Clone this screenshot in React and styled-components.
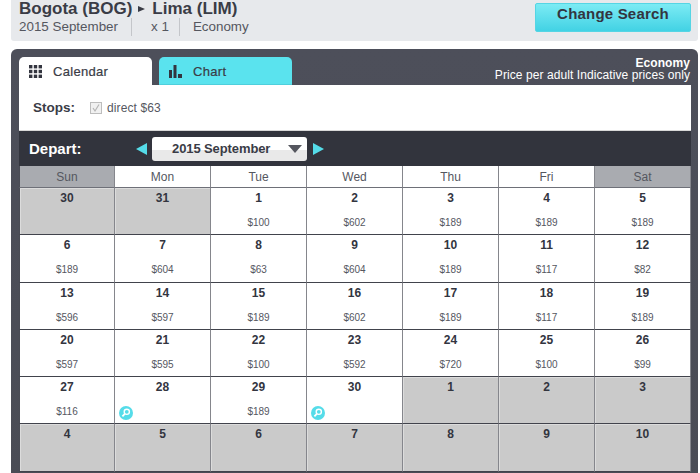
import React from 'react';
import styled, { createGlobalStyle } from 'styled-components';

const GlobalStyle = createGlobalStyle`
    html, body {
        margin: 0;
        padding: 0;
        background: #fff;
        height: 473px;
        overflow: hidden;
    }
    * { box-sizing: border-box; }
`;

const Page = styled.div`
    width: 700px;
    height: 473px;
    overflow: hidden;
    padding: 0 2px 0 11px;
    font-family: "Liberation Sans", Arial, sans-serif;
    color: #3a3c46;
`;

const SearchBar = styled.div`
    height: 41px;
    background: #e7e9ec;
    border-radius: 0 0 3px 3px;
    display: flex;
    justify-content: space-between;
    padding: 0 7px 0 8px;
    margin-bottom: 8px;
`;

const Route = styled.div`
    font-size: 17px;
    font-weight: bold;
    line-height: 17px;
    color: #3a3c46;
    display: flex;
    align-items: center;
`;

const RouteArrow = styled.span`
    width: 0;
    height: 0;
    margin: 1px 7px 0 6px;
    border-left: 7px solid #3a3c46;
    border-top: 3.5px solid transparent;
    border-bottom: 3.5px solid transparent;
`;

const Summary = styled.div`
    display: flex;
    margin-top: 1px;
    font-size: 13.4px;
    line-height: 18px;
    color: #55575f;
`;

const SummaryItem = styled.span`
    padding: 0 ${p => p.$right}px 0 ${p => p.$left}px;
    border-right: ${p => (p.$last ? 'none' : '1px solid #c4c6ca')};
`;

const ChangeButton = styled.button`
    width: 156px;
    height: 29px;
    margin-top: 3px;
    padding: 0 0 9px;
    border: 1px solid #55d5e4;
    border-radius: 2px;
    background: linear-gradient(#7cebf4, #42d2e4);
    color: #33353f;
    font-family: inherit;
    font-size: 15px;
    font-weight: bold;
    letter-spacing: 0.2px;
`;

const Panel = styled.div`
    height: 440px;
    background: linear-gradient(#4d4f5a, #4a4c55);
    border-radius: 6px 6px 0 0;
    padding: 8px 7px 0 8px;
`;

const PanelTop = styled.div`
    height: 28px;
    display: flex;
    justify-content: space-between;
`;

const Tabs = styled.div`
    display: flex;
    gap: 7px;
`;

const Tab = styled.div`
    width: 133px;
    height: 28px;
    border-radius: 5px 5px 0 0;
    background: ${p => (p.$active ? '#fff' : '#5ae3ee')};
    box-shadow: ${p => (p.$active ? 'none' : 'inset 0 -1px 0 #4fcfdc')};
    display: flex;
    align-items: center;
    padding-left: 10px;
    gap: 11px;
    font-size: 13px;
    letter-spacing: 0.3px;
    color: #3a3c46;
    -webkit-text-stroke: 0.2px #3a3c46;
`;

const Notes = styled.div`
    text-align: right;
    color: #fff;
    font-size: 12px;
    line-height: 13px;
    letter-spacing: 0.08px;
    padding-right: 1px;
`;

const NoteTitle = styled.div`
    font-weight: bold;
    line-height: 12px;
`;

const StopsRow = styled.div`
    height: 46px;
    background: #fff;
    display: flex;
    align-items: center;
    padding-left: 14px;
    border-bottom: 1px solid #d8d8d8;
    font-size: 12px;
    letter-spacing: 0.12px;
    color: #55575f;
`;

const StopsLabel = styled.span`
    font-size: 13.5px;
    font-weight: bold;
    letter-spacing: 0;
    color: #3a3c46;
    margin-right: 15px;
`;

const CheckBox = styled.span`
    width: 12px;
    height: 12px;
    border: 1px solid #bdbdbd;
    background: #f1f1f1;
    margin-right: 5px;
    display: flex;
    align-items: center;
    justify-content: center;
`;

const DepartBar = styled.div`
    height: 35px;
    background: #32343d;
    display: flex;
    align-items: center;
    padding-left: 10px;
`;

const DepartLabel = styled.span`
    width: 107px;
    color: #fff;
    font-size: 15px;
    font-weight: bold;
`;

const Arrow = styled.span`
    width: 0;
    height: 0;
    border-top: 6.5px solid transparent;
    border-bottom: 6.5px solid transparent;
    border-${p => (p.$left ? 'right' : 'left')}: 11px solid #55dce9;
    margin: 0 ${p => (p.$left ? 5 : 0)}px 0 ${p => (p.$left ? 0 : 6)}px;
`;

const MonthSelect = styled.div`
    width: 155px;
    height: 24px;
    border-radius: 3px;
    background: linear-gradient(#fff 0, #fff 55%, #e9e9e9 55%, #e9e9e9 100%);
    display: flex;
    align-items: center;
    justify-content: space-between;
    padding: 0 5px 0 20px;
    font-size: 13px;
    font-weight: bold;
    letter-spacing: -0.1px;
    color: #3a3c46;
`;

const Caret = styled.span`
    width: 0;
    height: 0;
    border-left: 7.5px solid transparent;
    border-right: 7.5px solid transparent;
    border-top: 8px solid #55575f;
`;

const Grid = styled.div`
    display: grid;
    grid-template-columns: repeat(7, 96px);
    background: #fff;
`;

const Head = styled.div`
    height: 22px;
    text-align: center;
    font-size: 12px;
    line-height: 23px;
    color: #55575f;
    background: ${p => (p.$weekend ? '#a9abb0' : '#fff')};
    border-right: 1px solid #85868c;
    border-bottom: 1px solid #6e7078;
    border-left: ${p => (p.$first ? '1px solid #4a4c55' : 'none')};
`;

const Day = styled.div`
    position: relative;
    height: ${p => (p.$tall ? 48 : 47)}px;
    text-align: center;
    background: ${p => (p.$muted ? '#cacaca' : '#fff')};
    border-right: 1px solid #85868c;
    border-bottom: 1px solid #41434c;
    border-left: ${p => (p.$first ? '1px solid #4a4c55' : 'none')};
    box-shadow: ${p => (p.$muted ? 'inset 1px 1px 0 #dcdcdc' : 'none')};
    padding-top: 3px;
`;

const DayNumber = styled.div`
    font-size: 12px;
    font-weight: bold;
    line-height: 14px;
    color: #33353f;
`;

const Price = styled.div`
    margin-top: 12px;
    font-size: 10px;
    line-height: 12px;
    color: #55575f;
`;

const SearchIcon = styled.svg`
    position: absolute;
    left: 4px;
    bottom: 3px;
`;

const weekdays = ['Sun', 'Mon', 'Tue', 'Wed', 'Thu', 'Fri', 'Sat'];

const days = [
    [30, null, 1], [31, null, 1], [1, '$100'], [2, '$602'], [3, '$189'], [4, '$189'], [5, '$189'],
    [6, '$189'], [7, '$604'], [8, '$63'], [9, '$604'], [10, '$189'], [11, '$117'], [12, '$82'],
    [13, '$596'], [14, '$597'], [15, '$189'], [16, '$602'], [17, '$189'], [18, '$117'], [19, '$189'],
    [20, '$597'], [21, '$595'], [22, '$100'], [23, '$592'], [24, '$720'], [25, '$100'], [26, '$99'],
    [27, '$116'], [28, 'search'], [29, '$189'], [30, 'search'], [1, null, 1], [2, null, 1], [3, null, 1],
    [4, null, 1], [5, null, 1], [6, null, 1], [7, null, 1], [8, null, 1], [9, null, 1], [10, null, 1],
];

const Magnifier = () => (
    <SearchIcon width="14" height="14" viewBox="0 0 14 14">
        <circle cx="7" cy="7" r="7" fill="#55dce9" />
        <circle cx="7.8" cy="5.8" r="2.6" fill="none" stroke="#fff" strokeWidth="1.4" />
        <path d="M5.8 7.9 L3.4 10.4" stroke="#fff" strokeWidth="1.8" />
    </SearchIcon>
);

const App = () => (
    <Page>
        <GlobalStyle />
        <SearchBar>
            <div>
                <Route>Bogota (BOG)<RouteArrow />Lima (LIM)</Route>
                <Summary>
                    <SummaryItem $left={0} $right={13}>2015 September</SummaryItem>
                    <SummaryItem $left={19} $right={10}>x 1</SummaryItem>
                    <SummaryItem $left={13} $right={0} $last>Economy</SummaryItem>
                </Summary>
            </div>
            <ChangeButton>Change Search</ChangeButton>
        </SearchBar>
        <Panel>
            <PanelTop>
                <Tabs>
                    <Tab $active>
                        <svg width="13" height="13" viewBox="0 0 13 13" fill="#33353f">
                            <rect x="0" y="0" width="3.4" height="3.4" />
                            <rect x="4.8" y="0" width="3.4" height="3.4" />
                            <rect x="9.6" y="0" width="3.4" height="3.4" />
                            <rect x="0" y="4.8" width="3.4" height="3.4" />
                            <rect x="4.8" y="4.8" width="3.4" height="3.4" />
                            <rect x="9.6" y="4.8" width="3.4" height="3.4" />
                            <rect x="0" y="9.6" width="3.4" height="3.4" />
                            <rect x="4.8" y="9.6" width="3.4" height="3.4" />
                            <rect x="9.6" y="9.6" width="3.4" height="3.4" />
                        </svg>
                        Calendar
                    </Tab>
                    <Tab>
                        <svg width="13" height="13" viewBox="0 0 13 13" fill="#33353f">
                            <rect x="0" y="5" width="3" height="8" />
                            <rect x="4.5" y="0" width="3" height="13" />
                            <rect x="9" y="9" width="4" height="4" />
                        </svg>
                        Chart
                    </Tab>
                </Tabs>
                <Notes>
                    <NoteTitle>Economy</NoteTitle>
                    Price per adult Indicative prices only
                </Notes>
            </PanelTop>
            <StopsRow>
                <StopsLabel>Stops:</StopsLabel>
                <CheckBox>
                    <svg width="10" height="10" viewBox="0 0 10 10">
                        <path d="M2 5 L4 8 L8 1.5" fill="none" stroke="#b5b5b5" strokeWidth="1.2" />
                    </svg>
                </CheckBox>
                direct $63
            </StopsRow>
            <DepartBar>
                <DepartLabel>Depart:</DepartLabel>
                <Arrow $left />
                <MonthSelect>2015 September<Caret /></MonthSelect>
                <Arrow />
            </DepartBar>
            <Grid>
                {weekdays.map((d, i) => (
                    <Head key={d} $weekend={i === 0 || i === 6} $first={i === 0}>{d}</Head>
                ))}
                {days.map(([n, info, muted], i) => {
                    const row = Math.floor(i / 7);
                    return (
                        <Day key={i} $muted={muted} $first={i % 7 === 0} $tall={row === 1 || row === 5}>
                            <DayNumber>{n}</DayNumber>
                            {info === 'search' && <Magnifier />}
                            {info && info !== 'search' && <Price>{info}</Price>}
                        </Day>
                    );
                })}
            </Grid>
        </Panel>
    </Page>
);

export default App;
